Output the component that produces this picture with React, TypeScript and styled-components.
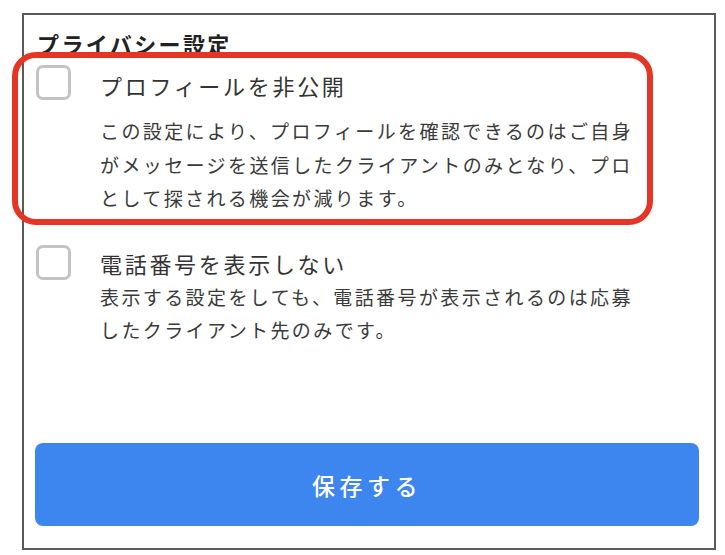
import React, { FC } from 'react';
import styled, { createGlobalStyle } from 'styled-components';

const GlobalStyle = createGlobalStyle`
  html, body {
    margin: 0;
    padding: 0;
    background: #fff;
  }
  body {
    font-family: "Noto Sans CJK JP", "Noto Sans", sans-serif;
    color: #333;
  }
`;

const Page = styled.div`
  width: 725px;
  height: 555px;
  padding: 13px 0 0 22px;
  box-sizing: border-box;
`;

const Frame = styled.section`
  display: flex;
  flex-direction: column;
  width: 694px;
  height: 537px;
  box-sizing: border-box;
  border: 2px solid #5a5a5a;
  padding: 14px 15px 22px 12px;
`;

const Title = styled.h2`
  margin: 0 0 0 1px;
  font-size: 22px;
  line-height: 28px;
  font-weight: 700;
  letter-spacing: 2.4px;
  color: #222;
`;

const Option = styled.label<{ $top: number }>`
  position: relative;
  display: flex;
  align-items: flex-start;
  gap: 29px;
  margin-top: ${p => p.$top}px;
  cursor: pointer;
`;

// red annotation ring drawn over the first option
const Highlight = styled.span`
  position: absolute;
  left: -24px;
  top: -13px;
  width: 641px;
  height: 173px;
  box-sizing: border-box;
  border: 6px solid #e53526;
  border-radius: 24px;
  pointer-events: none;
`;

const Box = styled.input.attrs({ type: 'checkbox' })`
  appearance: none;
  flex: 0 0 auto;
  width: 35px;
  height: 35px;
  margin: 0;
  box-sizing: border-box;
  border: 3px solid #c3c3c3;
  border-radius: 7px;
  background: #fff;
`;

const Body = styled.div<{ $pad: number }>`
  display: flex;
  flex-direction: column;
  padding-top: ${p => p.$pad}px;
  width: 545px;
`;

const Label = styled.div`
  font-size: 22px;
  line-height: 34px;
  letter-spacing: 2.7px;
  color: #333;
`;

const Desc = styled.p<{ $gap: number }>`
  margin: ${p => p.$gap}px 0 0;
  font-size: 19px;
  line-height: 33.5px;
  letter-spacing: 2.4px;
  color: #3a3a3a;
`;

const SaveButton = styled.button`
  margin: auto 0 0 -1px;
  width: 664px;
  height: 83px;
  border: none;
  border-radius: 8px;
  background: #3d86f0;
  color: #fff;
  font-family: inherit;
  font-size: 23px;
  font-weight: 500;
  letter-spacing: 4.5px;
  cursor: pointer;
`;

type OptionProps = {
  label: string;
  desc: string;
  top: number;
  pad: number;
  gap: number;
  highlighted?: boolean;
};

const PrivacyOption: FC<OptionProps> = ({ label, desc, top, pad, gap, highlighted }) => (
  <Option $top={top}>
    {highlighted && <Highlight />}
    <Box />
    <Body $pad={pad}>
      <Label>{label}</Label>
      <Desc $gap={gap}>{desc}</Desc>
    </Body>
  </Option>
);

const App = () => (
  <Page>
    <GlobalStyle />
    <Frame>
      <Title>プライバシー設定</Title>
      <PrivacyOption
        highlighted
        top={8}
        pad={3}
        gap={12}
        label="プロフィールを非公開"
        desc="この設定により、プロフィールを確認できるのはご自身がメッセージを送信したクライアントのみとなり、プロとして探される機会が減ります。"
      />
      <PrivacyOption
        top={30}
        pad={1}
        gap={0}
        label="電話番号を表示しない"
        desc="表示する設定をしても、電話番号が表示されるのは応募したクライアント先のみです。"
      />
      <SaveButton>保存する</SaveButton>
    </Frame>
  </Page>
);

export default App;
